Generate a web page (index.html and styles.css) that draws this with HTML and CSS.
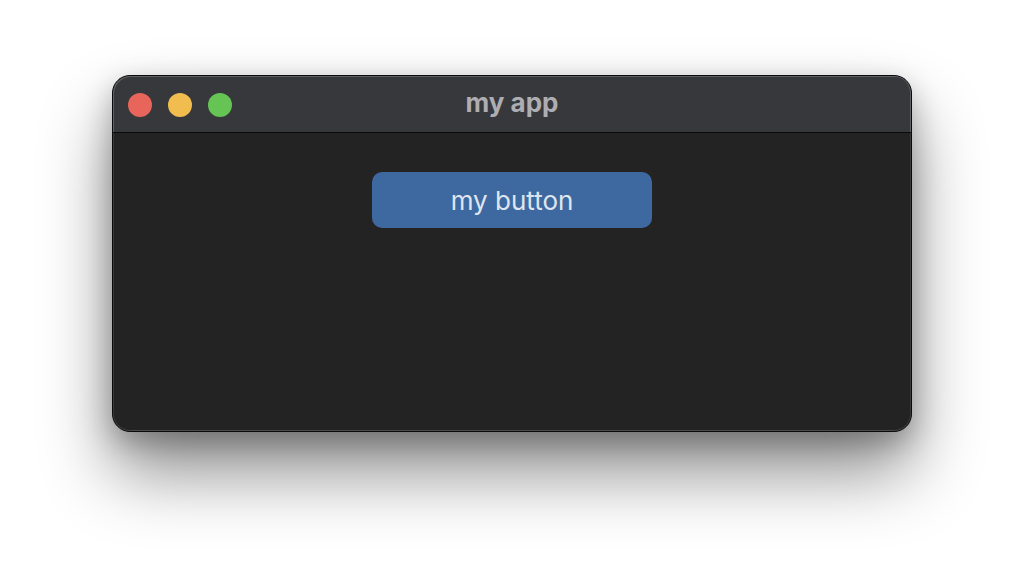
FILE: index.html
```html
<!DOCTYPE html>
<html lang="en">
<head>
    <meta charset="UTF-8">
    <meta name="viewport" content="width=device-width, initial-scale=1.0">
    <title>my app</title>
    <link rel="stylesheet" href="styles.css">
</head>
<body>
    <div class="window">
        <!-- Title bar -->
        <div class="titlebar">
            <div class="lights">
                <span class="light red"></span>
                <span class="light yellow"></span>
                <span class="light green"></span>
            </div>
            <div class="title">my app</div>
        </div>

        <!-- Window content -->
        <div class="content">
            <button class="btn">my button</button>
        </div>
    </div>
</body>
</html>
```

FILE: styles.css
```css
html, body {
    height: 100%;
}

body {
    margin: 0;
    padding: 75px 0 0;
    box-sizing: border-box;
    background: #fff;
    font-family: Inter, "Noto Sans", sans-serif;
}

.window {
    width: 798px;
    height: 355px;
    margin: 0 auto;
    border: 1px solid #0b0b0b;
    border-radius: 18px;
    overflow: hidden;
    background: #232323;
    display: flex;
    flex-direction: column;
    box-shadow: 0 40px 70px rgba(0, 0, 0, 0.45), 0 10px 28px rgba(0, 0, 0, 0.25);
}

.titlebar {
    height: 56px;
    background: #37383c;
    border-bottom: 1px solid #0a0a0a;
    display: flex;
    align-items: center;
    position: relative;
    border-radius: 17px 17px 0 0;
    box-shadow: inset 1px 1px 0 #5f6064, inset -1px 0 0 #5f6064;
}

.lights {
    display: flex;
    gap: 16px;
    padding-left: 15px;
    padding-top: 1px;
}

.light {
    width: 24px;
    height: 24px;
    border-radius: 50%;
}

.red { background: #e7655a; }
.yellow { background: #f2bd4f; }
.green { background: #65c454; }

.title {
    position: absolute;
    left: 0;
    right: 0;
    top: 12px;
    text-align: center;
    color: #aeaeb2;
    font-family: Inter, "Liberation Sans", sans-serif;
    font-weight: bold;
    font-size: 26px;
    line-height: 30px;
}

.content {
    flex: 1;
    display: flex;
    justify-content: center;
    padding-top: 39px;
    border-radius: 0 0 17px 17px;
    box-shadow: inset 1px 0 0 #3a3a3c, inset -1px 0 0 #3a3a3c, inset 0 -1px 0 #4a4a4c;
}

.btn {
    width: 280px;
    height: 56px;
    border: none;
    border-radius: 10px;
    background: #3e69a0;
    color: #dfe5ef;
    font-family: Inter, "Noto Sans", sans-serif;
    font-size: 26px;
    padding: 0;
}
```
